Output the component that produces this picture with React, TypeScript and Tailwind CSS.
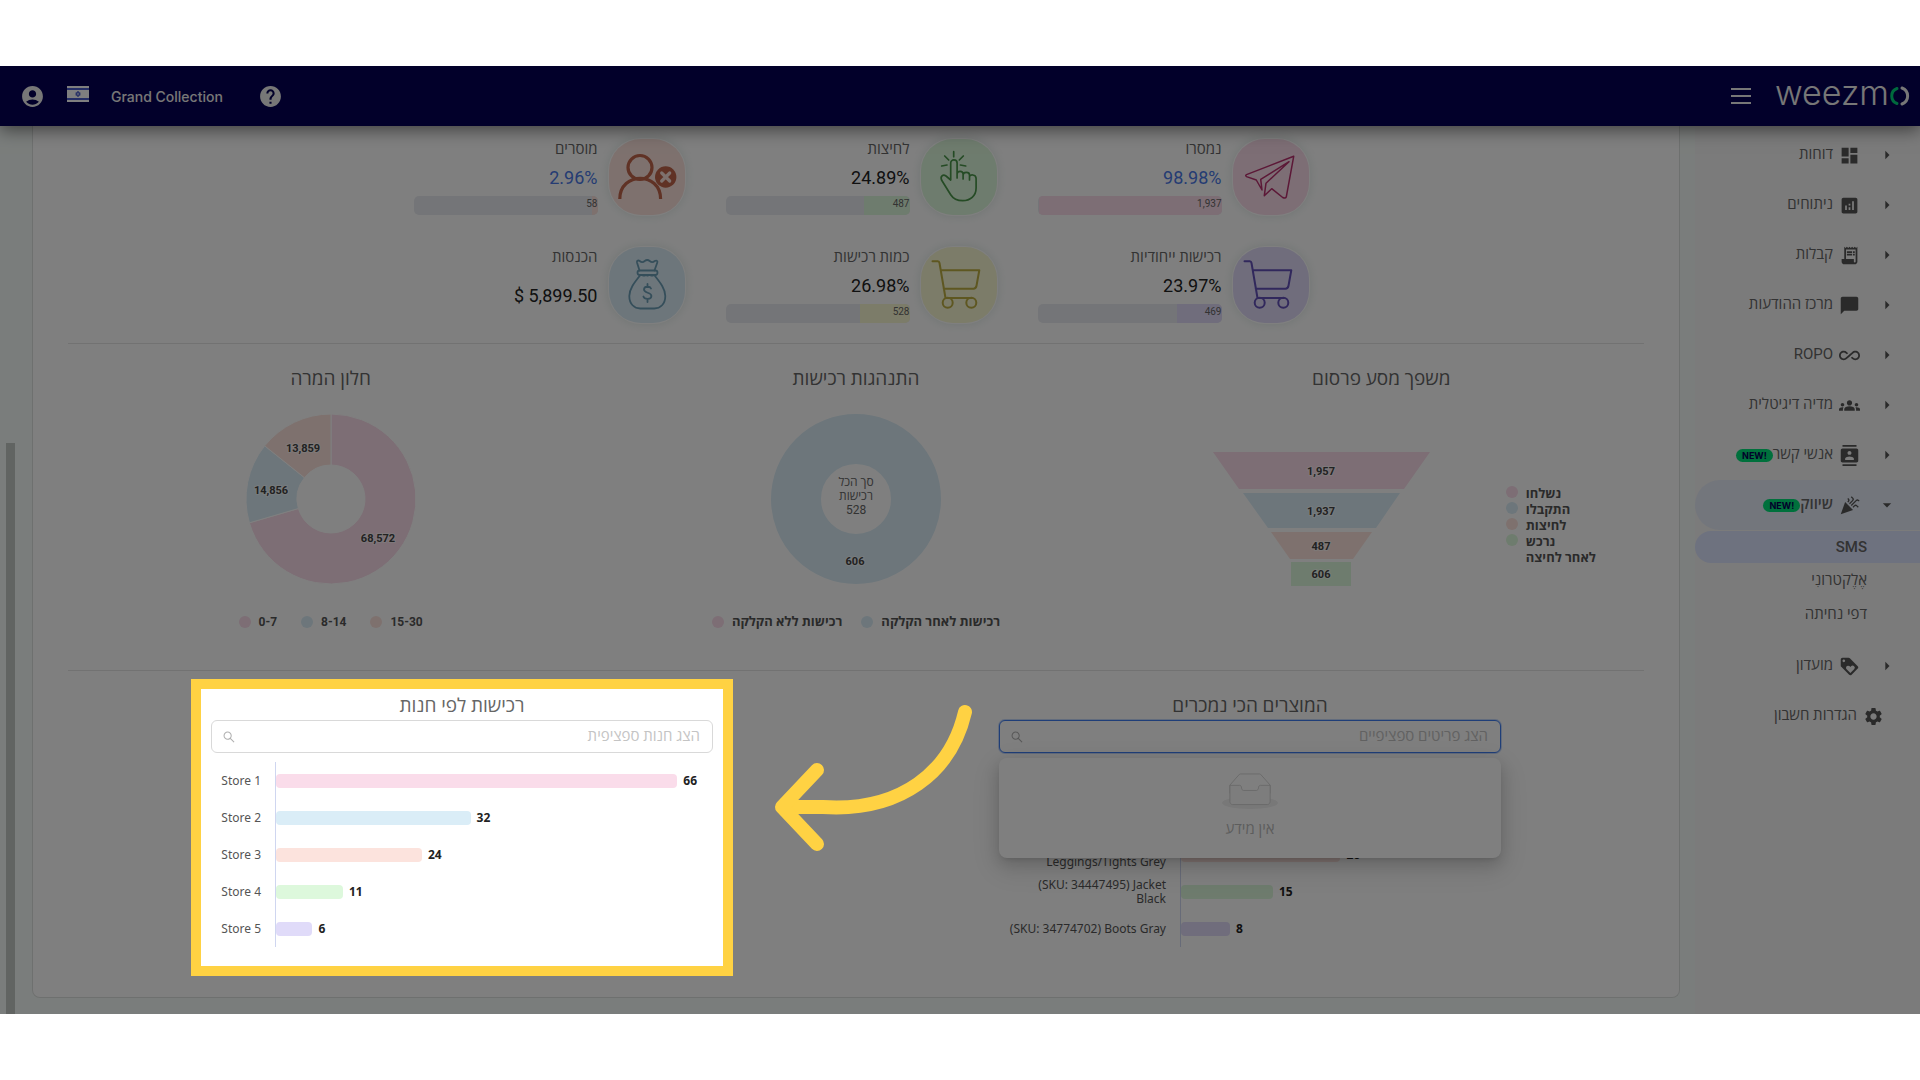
import type { ReactNode } from "react";
import type { IconType } from "react-icons";
import { AiOutlineSearch } from "react-icons/ai";
import {
  MdAccountCircle,
  MdAllInclusive,
  MdAnalytics,
  MdArrowDropDown,
  MdArrowRight,
  MdCelebration,
  MdChatBubble,
  MdContacts,
  MdDashboard,
  MdGroups,
  MdHelp,
  MdLoyalty,
  MdReceiptLong,
  MdSettings,
} from "react-icons/md";

const PINK = "#fadcea";
const BLUE = "#daedf7";
const PEACH = "#fce3dd";
const GREEN = "#ddf8dc";
const PURPLE = "#e0dbf9";
const YELLOW = "#f8f8d2";

type NavItem = { label: string; icon: IconType; isNew?: boolean };

const NAV: NavItem[] = [
  { label: "דוחות", icon: MdDashboard },
  { label: "ניתוחים", icon: MdAnalytics },
  { label: "קבלות", icon: MdReceiptLong },
  { label: "מרכז ההודעות", icon: MdChatBubble },
  { label: "ROPO", icon: MdAllInclusive },
  { label: "מדיה דיגיטלית", icon: MdGroups },
  { label: "אנשי קשר", icon: MdContacts, isNew: true },
];

const PlaneIcon = (
  <g stroke="#b8306e" strokeWidth="1.5">
    <path d="M60.7 17.3 13.5 35.6q-1.6.9 0 2l9.8 3.4L29 51l-1.3-10.7L56 22.7 33 44.2l-1.7 12.5 7.4-7 11 8.8q2.8 1.2 3.6-.6z" />
  </g>
);

const HandIcon = (
  <g stroke="#4a964a" strokeWidth="1.7">
    <path d="M29.7 40.5V24a3.2 3.2 0 0 1 6.4 0v15M36.1 35c0-3.6 6-3.6 6 0v5M42.1 36c0-3.4 6.4-3.4 6.4 0v5M48.5 38c0-3 6.6-2.8 6.6 1.5V49c0 8-6 12.7-13.4 12.7-6 0-9.8-2.5-12-6l-9-14.4c-1.8-4 1.2-6.4 4.3-4.3l4.7 4" />
    <path d="M32.7 12.7v5M23.7 17l4 4M42.3 17l-4 4M20.7 27l5.3-1M39.4 26l5.3 1" />
  </g>
);

const UserIcon = (
  <g stroke="#c0644a">
    <circle cx="31" cy="28.5" r="12" strokeWidth="3.2" />
    <path d="M10.8 60c0-27.5 40.8-27.5 40.8 0" strokeWidth="3.2" strokeLinecap="butt" />
    <circle cx="56.7" cy="38" r="10.7" fill="#c0644a" stroke="none" />
    <path d="m52.7 34 8 8m0-8-8 8" stroke={PEACH} strokeWidth="3.2" />
  </g>
);

const BagIcon = (
  <g stroke="#6b9db5" strokeWidth="1.8">
    <path d="M30.5 23.5 28 15.5c-.5-2 1.5-2.4 2.7-1.5 1.7 1.5 3.4 1.5 5 0 1.7-1.3 3.4-1.3 5 0 1.7 1.5 3.4 1.5 5 0 1.6-1 3.2-.2 2.6 1.5l-2.8 8" />
    <rect x="28.5" y="23.5" width="20" height="4.5" rx="2.2" />
    <path d="M31 28.5C25 36 20.3 42 20.3 49c0 8 5 12.5 11 12.5h14c6 0 11-4.5 11-12.5 0-7-4.7-13-10.7-20.5M34 28.5h2M38 28.5h1M42 28.5h2" />
    <path d="M42 41.5c-1-2.5-7-2.5-7 1 0 4 7.4 2.5 7.4 6.5 0 3.8-7 3.8-8 .5M38.5 37v3M38.5 52v3" />
  </g>
);

function CartIcon({ color }: { color: string }) {
  return (
    <g stroke={color} strokeWidth="2">
      <path d="M11.5 14.3h5.3c1 0 1.5.6 1.7 1.7L24.5 51h26.2M19.7 23.3h38.6l-2.8 15.5c-.4 2-1.2 2.9-3 2.9H22.7" />
      <circle cx="26.7" cy="55.7" r="5" />
      <circle cx="50.3" cy="55.7" r="5" />
    </g>
  );
}

type Kpi = {
  label: string;
  value: string;
  link?: boolean;
  count?: string;
  percent?: number;
  color: string;
  icon: ReactNode;
};

const KPIS: Kpi[] = [
  { label: "נמסרו", value: "98.98%", link: true, count: "1,937", percent: 99, color: PINK, icon: PlaneIcon },
  { label: "לחיצות", value: "24.89%", count: "487", percent: 25, color: GREEN, icon: HandIcon },
  { label: "מוסרים", value: "2.96%", link: true, count: "58", percent: 3, color: PEACH, icon: UserIcon },
  { label: "רכישות ייחודיות", value: "23.97%", count: "469", percent: 24, color: PURPLE, icon: <CartIcon color="#6350b8" /> },
  { label: "כמות רכישות", value: "26.98%", count: "528", percent: 27, color: YELLOW, icon: <CartIcon color="#bdae42" /> },
  { label: "הכנסות", value: "$ 5,899.50", color: BLUE, icon: BagIcon },
];

const WINDOW_SLICES = [
  { name: "0-7", value: 68572, color: PINK, x: 47, y: 43 },
  { name: "8-14", value: 14856, color: BLUE, x: -60, y: -5 },
  { name: "15-30", value: 13859, color: PEACH, x: -28, y: -47 },
];

const FUNNEL = [
  { label: "1,957", color: PINK, points: "0,0 217,0 191,37 26,37", y: 23 },
  { label: "1,937", color: BLUE, points: "30,41 187,41 163,76 55,76", y: 63 },
  { label: "487", color: PEACH, points: "58,80 159,80 140,107 77,107", y: 98 },
  { label: "606", color: GREEN, points: "78,110 138,110 138,134 78,134", y: 126 },
];

const FUNNEL_LEGEND = [
  { lines: ["נשלחו"], color: PINK },
  { lines: ["התקבלו"], color: BLUE },
  { lines: ["לחיצות"], color: PEACH },
  { lines: ["נרכש", "לאחר לחיצה"], color: GREEN },
];

const STORES = [
  { lines: ["Store 1"], value: 66, color: PINK },
  { lines: ["Store 2"], value: 32, color: BLUE },
  { lines: ["Store 3"], value: 24, color: PEACH },
  { lines: ["Store 4"], value: 11, color: GREEN },
  { lines: ["Store 5"], value: 6, color: PURPLE },
];

const PRODUCTS = [
  { lines: ["", "Leggings/Tights Grey"], value: 26, color: PEACH },
  { lines: ["(SKU: 34447495) Jacket", "Black"], value: 15, color: GREEN },
  { lines: ["(SKU: 34774702) Boots Gray"], value: 8, color: PURPLE },
];

function slicePath(from: number, to: number, outer: number, inner: number) {
  const at = (t: number, r: number) =>
    `${(Math.sin(t * 2 * Math.PI) * r).toFixed(2)} ${(-Math.cos(t * 2 * Math.PI) * r).toFixed(2)}`;
  const large = to - from > 0.5 ? 1 : 0;
  return `M${at(from, outer)}A${outer} ${outer} 0 ${large} 1 ${at(to, outer)}L${at(to, inner)}A${inner} ${inner} 0 ${large} 0 ${at(from, inner)}Z`;
}

function ChartLabel({ x, y, children }: { x: number; y: number; children: ReactNode }) {
  return (
    <text
      x={x}
      y={y}
      textAnchor="middle"
      className="fill-[#444] stroke-white/60 stroke-2 text-[11px] font-bold"
      paintOrder="stroke"
    >
      {children}
    </text>
  );
}

function Dot({ color }: { color: string }) {
  return <span className="size-3 shrink-0 rounded-full" style={{ backgroundColor: color }} />;
}

function Header() {
  return (
    <header className="relative z-[5] flex h-[60px] items-center justify-between bg-[#040054] pr-2.5 pl-5 text-white shadow-[0_4px_16px_rgba(0,0,0,0.5)]">
      <div className="flex items-center gap-6">
        <a
          href="#home"
          dir="ltr"
          className="flex items-center font-[Inter] text-[34px] leading-[40px] text-[#eee]"
          aria-label="weezmo"
        >
          <span className="-mt-1.5 font-light">weezm</span>
          <svg width="21" height="20" viewBox="0 0 21 20" fill="none" strokeWidth="3" strokeLinecap="round">
            <path d="M8 2.5C1 5 1 15 8 17.5" stroke="#00d27a" />
            <path d="M13 2c7.500 3 7.500 13 0 16" stroke="currentColor" />
          </svg>
        </a>
        <button type="button" aria-label="תפריט" className="flex w-5 flex-col gap-[5px]">
          <span className="h-0.5 bg-[#eee]" />
          <span className="h-0.5 bg-[#eee]" />
          <span className="h-0.5 bg-[#eee]" />
        </button>
      </div>
      <div dir="ltr" className="flex items-center text-[#eee]">
        <button type="button" aria-label="חשבון">
          <MdAccountCircle className="size-[25px]" />
        </button>
        <svg width="22" height="16" viewBox="0 0 22 16" className="mb-1 ml-[22px]">
          <rect width="22" height="16" fill="#fff" />
          <path d="M0 2h22v2H0zM0 12h22v2H0z" fill="#4a5ccc" />
          <path d="m11 5.2 2.2 3.9H8.8zM11 10.8l2.200-3.9H8.8z" fill="none" stroke="#4a5ccc" />
        </svg>
        <span className="ml-[22px] font-[Inter] text-[14px] font-medium">Grand Collection</span>
        <button type="button" aria-label="עזרה" className="ml-[35px]">
          <MdHelp className="size-[25px]" />
        </button>
      </div>
    </header>
  );
}

function NavRow({ item, open = false }: { item: NavItem; open?: boolean }) {
  const Icon = item.icon;
  const Arrow = open ? MdArrowDropDown : MdArrowRight;
  return (
    <a
      href="#nav"
      className={
        open
          ? "flex h-[50px] items-center rounded-l-[25px] bg-[#e6ecf8] pr-[23px] font-semibold"
          : "flex h-[50px] items-center pr-[23px]"
      }
    >
      <Arrow className="size-5 shrink-0 text-[#555]" />
      <Icon className="mr-[17px] size-[21px] shrink-0 text-[#555]" />
      <span className="mr-1.5 pb-0.5">{item.label}</span>
      {item.isNew && (
        <span
          dir="ltr"
          className="rounded-full bg-[#00e078] px-1.5 font-[Inter] text-[9px] leading-[13px] font-bold text-[#040054]"
        >
          NEW!
        </span>
      )}
    </a>
  );
}

function Sidebar() {
  return (
    <nav className="w-[225px] shrink-0 bg-[#f6f6f6] pt-1 text-[15px] text-[#666]">
      {NAV.map((item) => (
        <NavRow key={item.label} item={item} />
      ))}
      <NavRow item={{ label: "שיווק", icon: MdCelebration, isNew: true }} open />
      <a href="#sms" className="mt-px flex h-8 items-center rounded-l-full bg-[#dce4ff] pr-[53px] font-medium">
        SMS
      </a>
      <a href="#email" className="flex h-[34px] items-center pr-[53px]">
        אֶלֶקטרוֹנִי
      </a>
      <a href="#landing" className="flex h-[34px] items-center pr-[53px]">
        דפי נחיתה
      </a>
      <div className="mt-2.5">
        <NavRow item={{ label: "מועדון", icon: MdLoyalty }} />
      </div>
      <a href="#settings" className="flex h-[50px] items-center gap-1.5 pr-9">
        <MdSettings className="size-[21px] text-[#555]" />
        <span className="pb-0.5">הגדרות חשבון</span>
      </a>
    </nav>
  );
}

function KpiTile({ kpi }: { kpi: Kpi }) {
  return (
    <div className="flex gap-[11px]">
      <div
        className="size-[76px] rounded-[32px] shadow-[0_0_0_1px_#fff,0_0_8px_2px_rgba(90,140,120,0.15)]"
        style={{ backgroundColor: kpi.color }}
      >
        <svg viewBox="0 0 76 76" fill="none" strokeLinecap="round" strokeLinejoin="round">
          {kpi.icon}
        </svg>
      </div>
      <div className="flex w-[184px] flex-col">
        <span className="text-[15px] leading-5 text-[#666]">{kpi.label}</span>
        <span
          dir="ltr"
          className={
            kpi.link
              ? "flex flex-1 items-center justify-end text-[18px] text-[#4a78e6]"
              : "flex flex-1 items-center justify-end text-[18px] text-[#222]"
          }
        >
          {kpi.value}
        </span>
        {kpi.count && (
          <div className="h-[19px] overflow-hidden rounded-[5px] bg-[#e9ebf0]">
            <div
              className="h-full text-[10px] leading-[15px] text-[#666]"
              style={{ width: `${kpi.percent}%`, backgroundColor: kpi.color }}
            >
              {kpi.count}
            </div>
          </div>
        )}
      </div>
    </div>
  );
}

function Title({ children }: { children: ReactNode }) {
  return <h2 className="text-center text-[19px] leading-6 text-[#666]">{children}</h2>;
}

function FunnelChart() {
  return (
    <section>
      <Title>משפך מסע פרסום</Title>
      <div dir="ltr" className="mt-[61px] flex items-start justify-center gap-[76px] pl-[46px]">
        <svg width="217" height="134">
          {FUNNEL.map((f) => (
            <g key={f.label}>
              <polygon points={f.points} fill={f.color} />
              <ChartLabel x={108} y={f.y}>
                {f.label}
              </ChartLabel>
            </g>
          ))}
        </svg>
        <ul className="mt-[34px] text-[13px] leading-4 font-bold text-[#555]">
          {FUNNEL_LEGEND.map((l) => (
            <li key={l.color} className="flex gap-2">
              <Dot color={l.color} />
              <span>
                {l.lines.map((line) => (
                  <span key={line} className="block">
                    {line}
                  </span>
                ))}
              </span>
            </li>
          ))}
        </ul>
      </div>
    </section>
  );
}

function PurchaseChart() {
  return (
    <section>
      <Title>התנהגות רכישות</Title>
      <svg width="170" height="170" viewBox="-85 -85 170 170" className="mx-auto mt-[23px]">
        <circle r="60" fill="none" stroke={BLUE} strokeWidth="50" />
        <g textAnchor="middle" className="fill-[#666] text-[12px]">
          <text y="-13">סך הכל</text>
          <text y="1">רכישות</text>
          <text y="15">528</text>
        </g>
        <ChartLabel x={-1} y={66}>
          606
        </ChartLabel>
      </svg>
      <div
        dir="ltr"
        className="mt-[30px] flex h-4 items-center justify-center gap-[19px] text-[13px] font-bold text-[#555]"
      >
        <span className="flex items-center gap-2">
          <Dot color={PINK} />
          רכישות ללא הקלקה
        </span>
        <span className="flex items-center gap-2">
          <Dot color={BLUE} />
          רכישות לאחר הקלקה
        </span>
      </div>
    </section>
  );
}

function WindowChart() {
  const total = WINDOW_SLICES.reduce((sum, s) => sum + s.value, 0);
  let start = 0;
  const slices = WINDOW_SLICES.map((s) => {
    const from = start;
    start += s.value / total;
    return { ...s, path: slicePath(from, start, 85, 34) };
  });
  return (
    <section>
      <Title>חלון המרה</Title>
      <svg width="170" height="170" viewBox="-85 -85 170 170" className="mx-auto mt-[23px]">
        {slices.map((s) => (
          <path key={s.name} d={s.path} fill={s.color} stroke="#fff" />
        ))}
        {slices.map((s) => (
          <ChartLabel key={s.name} x={s.x} y={s.y}>
            {s.value.toLocaleString("en-US")}
          </ChartLabel>
        ))}
      </svg>
      <div
        dir="ltr"
        className="mt-[30px] flex h-4 items-center justify-center gap-6 text-[12px] font-bold text-[#555]"
      >
        {WINDOW_SLICES.map((s) => (
          <span key={s.name} className="flex items-center gap-2">
            <Dot color={s.color} />
            {s.name}
          </span>
        ))}
      </div>
    </section>
  );
}

function SearchBox({ id, label, focused = false }: { id: string; label: string; focused?: boolean }) {
  return (
    <div
      className={
        focused
          ? "mt-0.5 flex h-[33px] items-center rounded-md border border-[#3f7df0] bg-white pr-3 pl-2.5 shadow-[0_0_0_1px_rgba(63,125,240,0.3)]"
          : "mt-0.5 flex h-[33px] items-center rounded-md border border-[#d9d9d9] bg-white pr-3 pl-2.5"
      }
    >
      <input
        id={id}
        type="text"
        aria-label={label}
        placeholder={label}
        className="min-w-0 flex-1 bg-transparent text-[15px] text-[#444] outline-none placeholder:text-[#c4c4c4]"
      />
      <AiOutlineSearch className="size-3.5 text-[#b0b0b0]" />
    </div>
  );
}

type Bar = { lines: string[]; value: number; color: string };

function BarRows({ bars, scale, wide = false }: { bars: Bar[]; scale: number; wide?: boolean }) {
  return (
    <>
      {bars.map((b) => (
        <div key={b.color} className="flex h-[37px] items-center">
          <div
            className={
              wide
                ? "w-[181px] shrink-0 pr-3.5 text-right text-[12px] leading-[14px] text-[#555]"
                : "w-16 shrink-0 pr-3.5 text-right text-[12px] leading-[14px] text-[#555]"
            }
          >
            {b.lines.map((line) => (
              <span key={line} className="block h-3.5 whitespace-nowrap">
                {line}
              </span>
            ))}
          </div>
          <div className="flex h-full items-center border-l border-[#cfd6f0]">
            <div className="h-3.5 rounded-[4px]" style={{ width: b.value * scale, backgroundColor: b.color }} />
            <span className="ml-1.5 text-[12px] font-bold text-[#222]">{b.value}</span>
          </div>
        </div>
      ))}
    </>
  );
}

function TopProducts() {
  return (
    <section className="relative mx-auto w-[542px] px-5 pt-[15px] pb-[29px]">
      <Title>המוצרים הכי נמכרים</Title>
      <SearchBox id="products" label="הצג פריטים ספציפיים" focused />
      <div dir="ltr" className="mt-[9px] h-[185px] pt-[74px] font-['Noto_Sans']">
        <BarRows bars={PRODUCTS} scale={6.13} wide />
      </div>
      <div className="absolute inset-x-5 top-[79px] flex h-[100px] flex-col items-center rounded-lg bg-white pt-[15px] shadow-[0_6px_16px_rgba(0,0,0,0.15),0_3px_6px_-4px_rgba(0,0,0,0.2),0_9px_28px_8px_rgba(0,0,0,0.08)]">
        <svg width="56" height="36" viewBox="0 0 64 41">
          <g transform="translate(0 1)" fill="none" fillRule="evenodd">
            <ellipse fill="#f0f0f0" cx="32" cy="33" rx="32" ry="7" />
            <g stroke="#d0d0d0">
              <path d="M55 12.76L44.854 1.258C44.367.474 43.656 0 42.907 0H21.093c-.749 0-1.46.474-1.947 1.257L9 12.761V22h46v-9.24z" />
              <path
                d="M41.613 15.931c0-1.605.994-2.93 2.227-2.931H55v18.137C55 33.26 53.68 35 52.05 35h-40.1C10.32 35 9 33.259 9 31.137V13h11.16c1.233 0 2.227 1.323 2.227 2.928v.022c0 1.605 1.005 2.901 2.237 2.901h14.752c1.232 0 2.237-1.308 2.237-2.913v-.007z"
                fill="#fafafa"
              />
            </g>
          </g>
        </svg>
        <p className="mt-2.5 text-[15px] leading-5 text-[#bbb]">אין מידע</p>
      </div>
    </section>
  );
}

function StorePurchases() {
  return (
    <section className="relative z-20 mx-auto w-[542px] border-10 border-[#ffd243] bg-white px-2.5 pt-[5px] pb-[19px]">
      <Title>רכישות לפי חנות</Title>
      <SearchBox id="stores" label="הצג חנות ספציפית" />
      <div dir="ltr" className="mt-[9px] font-['Noto_Sans']">
        <BarRows bars={STORES} scale={6.08} />
      </div>
      <svg
        width="200"
        height="150"
        fill="none"
        stroke="#ffd243"
        strokeWidth="14"
        strokeLinecap="round"
        strokeLinejoin="round"
        className="absolute top-3.5 left-[572px]"
      >
        <path d="M192 9C178 69 128 109 50 104H10" />
        <path d="M44 67 9 104l35 37" />
      </svg>
    </section>
  );
}

export default function App() {
  return (
    <div dir="rtl" className="min-h-screen bg-white py-[66px] font-['Roboto','Open_Sans',sans-serif]">
      <div className="relative overflow-hidden">
        <Header />
        <div className="relative flex bg-[#f5fbf8]">
          <Sidebar />
          <main className="min-w-0 flex-1 pr-[15px] pb-4 pl-8">
            <div className="rounded-b-lg border border-t-0 border-[#dde1df] bg-white px-[35px] pt-[13px] pb-[21px]">
              <div className="flex justify-center pl-2.5">
                <div className="grid grid-cols-3 gap-x-[41px] gap-y-8">
                  {KPIS.map((kpi) => (
                    <KpiTile key={kpi.label} kpi={kpi} />
                  ))}
                </div>
              </div>
              <div className="mt-5 grid grid-cols-3 border-y border-[#e4e4e4] pt-[23px] pb-10">
                <FunnelChart />
                <PurchaseChart />
                <WindowChart />
              </div>
              <div className="grid grid-cols-2 pt-2">
                <TopProducts />
                <StorePurchases />
              </div>
            </div>
          </main>
          <div className="absolute top-[317px] bottom-0 left-1.5 w-[9px] bg-[#c2c8c4]" />
        </div>
        <div className="pointer-events-none absolute inset-0 z-10 bg-black/50" />
      </div>
    </div>
  );
}
